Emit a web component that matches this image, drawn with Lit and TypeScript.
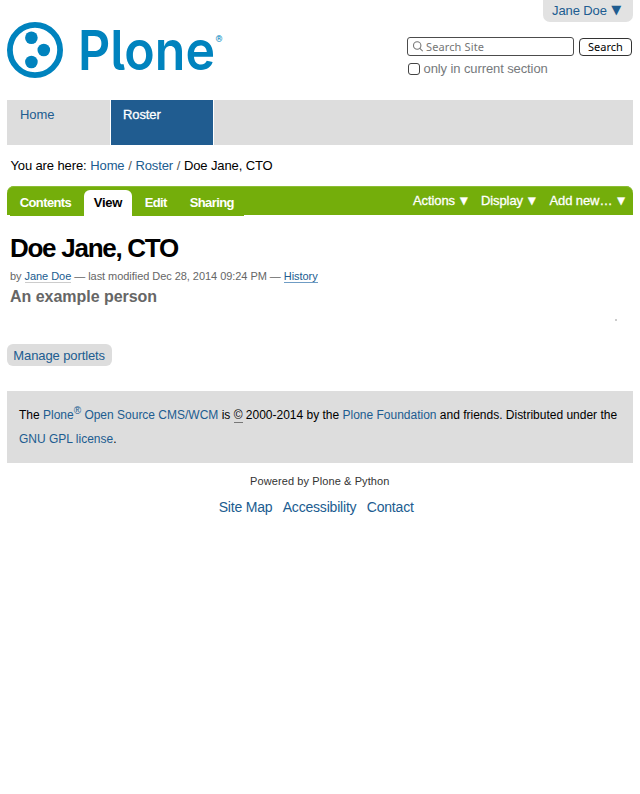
import { LitElement, html, css } from "lit";
import { customElement } from "lit/decorators.js";

@customElement("plone-logo")
class PloneLogo extends LitElement {
  static styles = css`
    :host { display: block; width: 220px; height: 72px; }
    svg { display: block; overflow: visible; }
    text { font-family: Inter, Roboto, sans-serif; fill: #0083be; }
    .word { font-size: 55px; font-weight: 600; font-feature-settings: "cv05" 1; }
    .mark { font-family: Roboto, sans-serif; font-size: 9px; font-weight: 700; }
  `;
  render() {
    return html`<svg width="220" height="72" viewBox="0 0 220 72">
      <circle cx="28" cy="28" r="25.1" fill="none" stroke="#0083be" stroke-width="5.8" />
      <circle cx="24.4" cy="15.8" r="6.3" fill="#0083be" />
      <circle cx="36.8" cy="28" r="6.3" fill="#0083be" />
      <circle cx="24.4" cy="40" r="6.3" fill="#0083be" />
      <text class="word" x="71" y="48" textLength="137" lengthAdjust="spacingAndGlyphs">Plone</text>
      <text class="mark" x="208.6" y="19.7" textLength="7" lengthAdjust="spacingAndGlyphs">®</text>
    </svg>`;
  }
}

@customElement("app-root")
class AppRoot extends LitElement {
  static styles = css`
    :host {
      display: block; height: 794px; overflow: hidden; box-sizing: border-box;
      padding: 0 7px; background: #fff; color: #000;
      font: 13px/18px "Liberation Sans", Arial, sans-serif;
      letter-spacing: -0.1px;
      white-space: nowrap;
    }
    a { color: #205c90; text-decoration: none; }
    .top { display: flex; justify-content: space-between; height: 100px; }
    plone-logo { margin-top: 22px; letter-spacing: 0; }
    .tools { display: flex; flex-direction: column; width: 226px; }
    .user {
      display: flex; gap: 4.5px;
      align-self: flex-end; box-sizing: border-box; width: 90px; height: 22px;
      padding-left: 9px; line-height: 21px; font-size: 13px;
      border-radius: 0 0 7px 7px; background: #e2e2e2;
    }
    .search { display: flex; align-items: flex-start; margin-top: 15px; font: 11px/17px "Noto Sans", sans-serif; letter-spacing: 0.12px; }
    .field {
      display: flex; align-items: center; box-sizing: border-box; width: 167px; height: 19px;
      border: 1px solid #4c4c4c; border-radius: 3px; padding-left: 5px; gap: 3px; color: #757575;
    }
    .go {
      box-sizing: border-box; width: 53px; height: 18px; margin: 1px 0 0 5px; text-align: center; letter-spacing: 0;
      border: 1px solid #333; border-radius: 4px; line-height: 16px; color: #000;
    }
    .only { display: flex; align-items: center; height: 18px; margin-top: 4px; color: #76797c; }
    .box { box-sizing: border-box; width: 12px; height: 12px; margin: 0 3.5px 0 1px; border: 1px solid #444; border-radius: 3px; }
    .nav { display: flex; gap: 1px; height: 45px; background: #ddd; }
    .nav a { box-sizing: border-box; width: 102px; padding: 6px 0 0 12px; box-shadow: 1px 0 #fff; }
    .nav a:first-child { width: 103px; padding-left: 13px; }
    .nav .on { color: #fff; background: #205c90; -webkit-text-stroke: 0.3px #fff; }
    .crumbs { display: flex; gap: 3.7px; height: 18px; margin: 12px 0 0 3.4px; letter-spacing: -0.11px; }
    .crumbs i { font-style: normal; color: #555; }
    .bar {
      display: flex; justify-content: space-between; height: 29px; margin-top: 11px;
      border-radius: 7px 7px 0 0; background: #74ae0b; box-shadow: inset 0 1px #8cbd35; color: #fff;
    }
    .tabs { display: flex; height: 26px; margin: 4px 0 0 3px; width: 234px; font-weight: 700; background: #74ae0b; line-height: 25px; letter-spacing: -0.6px; }
    .tabs span { box-sizing: border-box; padding-left: 9.7px; }
    .contents { width: 74px; }
    .view { width: 48px; color: #000; background: #fff; border-radius: 6px 6px 0 0; letter-spacing: -0.2px; }
    .edit { width: 45px; margin-left: 3px; }
    .share { width: 64px; }
    .menus { display: flex; line-height: 29px; -webkit-text-stroke: 0.3px #fff; }
    .menus span { box-sizing: border-box; display: flex; gap: 5px; }
    .tri { font: 10px/30px "DejaVu Sans", sans-serif; letter-spacing: 0; }
    .user .tri { font: 13px/20px "DejaVu Sans", sans-serif; }
    .m1 { width: 68px; } .m2 { width: 68.5px; } .m3 { width: 83.5px; }
    h1 { margin: 16px 0 0 3px; font-size: 26px; line-height: 34px; letter-spacing: -1.27px; }
    .byline { height: 16px; margin: 3px 0 0 3px; font-size: 11px; line-height: 16px; color: #666; letter-spacing: -0.05px; }
    .byline a { display: inline-block; height: 14px; border-bottom: 1px solid #ccc; }
    .byline a:last-child { border-color: #6f9cc4; }
    .desc { margin: 3px 0 0 3px; font-size: 16px; line-height: 20px; font-weight: 700; color: #666; letter-spacing: -0.03px; }
    .dot { width: 2px; height: 2px; margin: 12px 16px 0 auto; background: #ccc; }
    .manage {
      box-sizing: border-box; width: 105px; height: 22px; margin-top: 23px; padding-left: 6.3px;
      line-height: 23px; border-radius: 6px; background: #ddd;
    }
    .footer { box-sizing: border-box; height: 72px; margin-top: 25px; padding: 12px; background: #ddd; font-size: 12px; line-height: 24px; letter-spacing: -0.005px; }
    .footer sup { font-size: 10px; line-height: 0; vertical-align: 5px; }
    .footer u { text-decoration: none; border-bottom: 1px solid #777; }
    .powered { height: 16px; margin-top: 10px; font-size: 11px; line-height: 16px; color: #333; padding-left: 243px; letter-spacing: 0.1px; }
    .links { display: flex; gap: 10.4px; margin-top: 9px; padding-left: 211.7px; font-size: 14px; line-height: 18px; letter-spacing: -0.2px; }
  `;
  render() {
    return html`
      <div class="top">
        <plone-logo></plone-logo>
        <div class="tools">
          <a class="user">Jane Doe <span class="tri">▼</span></a>
          <div class="search">
            <div class="field">
              <svg width="10" height="11" viewBox="0 0 10 11" fill="none" stroke="#777" stroke-width="1.1">
                <circle cx="4.2" cy="4.5" r="3.7" /><path d="M6.9 7.3 9.7 10.2" />
              </svg><span>Search Site</span>
            </div>
            <div class="go">Search</div>
          </div>
          <div class="only"><span class="box"></span><span>only in current section</span></div>
        </div>
      </div>
      <nav class="nav"><a>Home</a><a class="on">Roster</a></nav>
      <div class="crumbs">
        <span>You are here:</span><a>Home</a><i>/</i><a>Roster</a><i>/</i><span>Doe Jane, CTO</span>
      </div>
      <div class="bar">
        <div class="tabs">
          <span class="contents">Contents</span><span class="view">View</span><span class="edit">Edit</span><span class="share">Sharing</span>
        </div>
        <div class="menus">
          <span class="m1">Actions <b class="tri">▼</b></span><span class="m2">Display <b class="tri">▼</b></span><span class="m3">Add new… <b class="tri">▼</b></span>
        </div>
      </div>
      <h1>Doe Jane, CTO</h1>
      <div class="byline">by <a>Jane Doe</a> — last modified Dec 28, 2014 09:24 PM — <a>History</a></div>
      <div class="desc">An example person</div>
      <div class="dot"></div>
      <div class="manage"><a>Manage portlets</a></div>
      <div class="footer">
        The <a>Plone<sup>®</sup> Open Source CMS/WCM</a> is <u>©</u> 2000-2014 by the <a>Plone Foundation</a> and friends. Distributed under the<br />
        <a>GNU GPL license</a>.
      </div>
      <div class="powered">Powered by Plone &amp; Python</div>
      <div class="links"><a>Site Map</a><a>Accessibility</a><a>Contact</a></div>
    `;
  }
}
